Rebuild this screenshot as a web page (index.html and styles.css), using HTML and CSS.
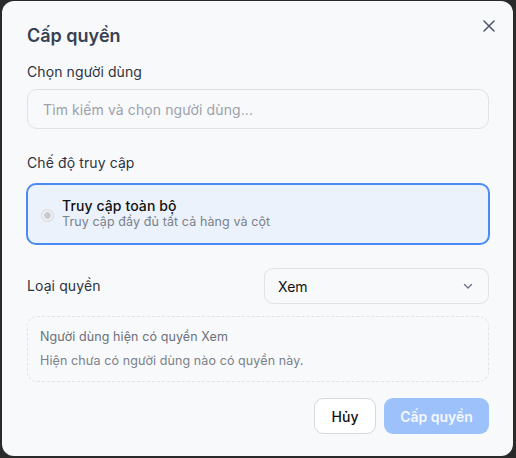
FILE: index.html
```html
<!DOCTYPE html>
<html lang="vi">
<head>
  <meta charset="utf-8">
  <title>Cấp quyền</title>
  <link rel="stylesheet" href="styles.css">
</head>
<body>
  <div class="dialog">
    <button class="close" aria-label="Đóng">
      <svg width="12" height="12" viewBox="0 0 12 12"><path d="M1 1L11 11M11 1L1 11" stroke="#4b5563" stroke-width="1.5" stroke-linecap="round"/></svg>
    </button>
    <h2 class="title">Cấp quyền</h2>

    <label class="label">Chọn người dùng</label>
    <input class="search" type="text" placeholder="Tìm kiếm và chọn người dùng...">

    <label class="label mode-label">Chế độ truy cập</label>
    <div class="option">
      <span class="radio"></span>
      <div class="option-text">
        <div class="option-title">Truy cập toàn bộ</div>
        <div class="option-desc">Truy cập đầy đủ tất cả hàng và cột</div>
      </div>
    </div>

    <div class="row">
      <label class="label">Loại quyền</label>
      <div class="select">
        <span>Xem</span>
        <svg width="12" height="12" viewBox="0 0 12 12"><path d="M2.5 4.5L6 8L9.5 4.5" fill="none" stroke="#6b7280" stroke-width="1.4" stroke-linecap="round" stroke-linejoin="round"/></svg>
      </div>
    </div>

    <div class="current">
      <div class="current-title">Người dùng hiện có quyền Xem</div>
      <div class="current-empty">Hiện chưa có người dùng nào có quyền này.</div>
    </div>

    <div class="actions">
      <button class="btn cancel">Hủy</button>
      <button class="btn grant">Cấp quyền</button>
    </div>
  </div>
</body>
</html>
```

FILE: styles.css
```css
html, body {
  margin: 0;
  height: 100%;
}
body {
  background-color: #2a2a2a;
  font-family: Inter, "Noto Sans", sans-serif;
  padding: 1px 3px 2px 2px;
  box-sizing: border-box;
}
.dialog {
  position: relative;
  background-color: #f8f9fb;
  border-radius: 12px;
  height: 100%;
  box-sizing: border-box;
  padding: 22px 24px 0 25px;
  display: flex;
  flex-direction: column;
}
.close {
  position: absolute;
  top: 19px;
  right: 18px;
  border: none;
  background: none;
  padding: 0;
  width: 12px;
  height: 12px;
  display: flex;
}
.title {
  margin: 0;
  font-size: 18px;
  font-weight: 600;
  color: #374151;
  line-height: 26px;
}
.label {
  font-size: 14px;
  color: #2d3340;
  line-height: 20px;
  letter-spacing: 0.1px;
}
.title + .label {
  margin-top: 13px;
}
.search {
  margin-top: 7px;
  height: 40px;
  box-sizing: border-box;
  border: 1px solid #dfe2e7;
  border-radius: 10px;
  background-color: #f8f9fb;
  padding: 0 15px;
  font-family: inherit;
  font-size: 14px;
  color: #111;
  outline: none;
  letter-spacing: 0.1px;
}
.search::placeholder {
  color: #9ca1ab;
}
.mode-label {
  margin-top: 24px;
}
.option {
  margin-top: 10px;
  height: 62px;
  box-sizing: border-box;
  border: 2px solid #4a8af4;
  border-radius: 10px;
  background-color: #ebf2fc;
  display: flex;
  align-items: center;
  padding: 0 12px 0 13px;
  gap: 8px;
  margin-left: -1px;
  margin-right: -1px;
}
.radio {
  width: 11px;
  height: 11px;
  border-radius: 50%;
  border: 1px solid #d6d8dc;
  background: radial-gradient(circle, #c8cacf 0 3px, #eceef1 3.5px);
  margin-top: 2px;
}
.option-text {
  line-height: 16px;
}
.option-title {
  font-size: 14px;
  font-weight: 500;
  color: #111;
  letter-spacing: 0.1px;
}
.option-desc {
  font-size: 12.5px;
  color: #7b808a;
  letter-spacing: 0.1px;
}
.row {
  margin-top: 23px;
  display: flex;
  align-items: center;
  justify-content: space-between;
}
.select {
  width: 225px;
  height: 36px;
  box-sizing: border-box;
  border: 1px solid #dfe2e7;
  border-radius: 9px;
  display: flex;
  align-items: center;
  justify-content: space-between;
  padding: 0 14px 0 13px;
  font-size: 14px;
  color: #111;
}
.current {
  margin-top: 12px;
  height: 66px;
  box-sizing: border-box;
  border: 1px dashed #dfe2e7;
  border-radius: 10px;
  padding: 12px 12px 0 12px;
  font-size: 12.5px;
  color: #6b7079;
  letter-spacing: 0.1px;
}
.current-empty {
  margin-top: 9px;
  color: #7b808a;
}
.actions {
  margin-top: 16px;
  display: flex;
  justify-content: flex-end;
  gap: 8px;
}
.btn {
  height: 36px;
  border-radius: 9px;
  font-family: inherit;
  font-size: 14px;
  padding: 0 15px;
}
.cancel {
  width: 62px;
  background-color: #fff;
  border: 1px solid #d5d8de;
  color: #111;
  font-weight: 500;
}
.grant {
  width: 105px;
  background-color: #9dc1fb;
  border: none;
  color: #f4f8ff;
  font-weight: 600;
}
```
